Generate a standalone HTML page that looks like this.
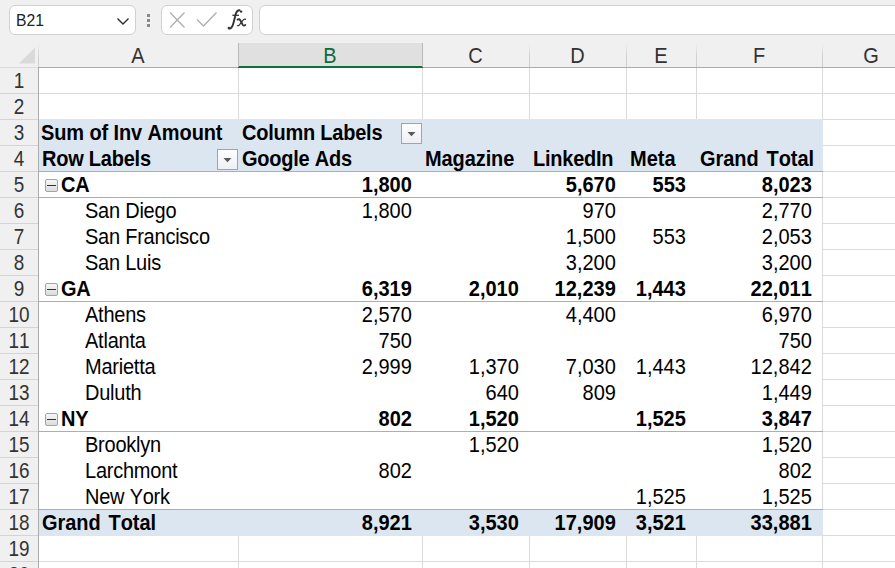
<!DOCTYPE html>
<html><head><meta charset="utf-8"><style>
*{box-sizing:border-box}
html,body{margin:0;padding:0}
body{width:895px;height:568px;overflow:hidden;position:relative;background:#f0f0f0;font-family:"Liberation Sans",sans-serif;color:#000}
.a{position:absolute}
.t{position:absolute;font-size:20px;line-height:22px;white-space:nowrap;font-kerning:none;font-feature-settings:"kern" 0}
.b{font-weight:bold}
.r{text-align:right}
.s{font-size:21.5px;transform:scaleX(0.93);transform-origin:left}
.s.r{transform-origin:right}
.hl{position:absolute;height:1px}
.vl{position:absolute;width:1px}
</style></head><body>

<div class="a" style="left:9px;top:5px;width:127px;height:30px;background:#fff;border:1px solid #d1d1d1;border-radius:6px"></div>
<div class="a" style="left:16px;top:12px;font-size:16px;line-height:18px;color:#222;transform:scaleX(0.98);transform-origin:left">B21</div>
<svg class="a" style="left:114px;top:14px" width="18" height="14" viewBox="0 0 18 14"><path d="M3.5 4.5 L9 10 L14.5 4.5" fill="none" stroke="#2b2b2b" stroke-width="1.4"/></svg>
<div class="a" style="left:147px;top:14px;width:3px;height:3px;background:#8a8a8a"></div>
<div class="a" style="left:147px;top:19px;width:3px;height:3px;background:#8a8a8a"></div>
<div class="a" style="left:147px;top:24px;width:3px;height:3px;background:#8a8a8a"></div>
<div class="a" style="left:161px;top:5px;width:92px;height:30px;background:#fff;border:1px solid #d1d1d1;border-radius:6px"></div>
<svg class="a" style="left:165px;top:8px" width="90" height="26" viewBox="0 0 90 26"><path d="M5 4.5 L19.5 19.5 M19.5 4.5 L5 19.5" stroke="#adadad" stroke-width="1.25" fill="none"/><path d="M32 11.5 L38.5 18 L51.5 4.5" stroke="#adadad" stroke-width="1.25" fill="none"/></svg>
<svg class="a" style="left:222px;top:5px" width="30" height="30" viewBox="0 0 30 30"><path d="M7.2 23.6 C9.2 23.8 10.6 21.5 11.6 17.5 L13.6 9.6 C14.4 6.4 15.8 5.2 17.6 5.3" fill="none" stroke="#333" stroke-width="1.9" stroke-linecap="round"/><circle cx="6.9" cy="22.9" r="1.25" fill="#333"/><circle cx="19.1" cy="6.6" r="1.2" fill="#333"/><path d="M10.4 10.3 L16.9 10.3" stroke="#333" stroke-width="1.3"/><path d="M15.6 14.6 Q17.4 13.4 18.5 15.6 L20.6 19.6 Q21.6 21.4 23.3 20.1" fill="none" stroke="#333" stroke-width="1.9" stroke-linecap="round"/><path d="M23.6 14.3 Q22.6 13.6 21.5 14.6 L17.4 19.8 Q16.4 21 15.4 20.7" fill="none" stroke="#333" stroke-width="1.2" stroke-linecap="round"/></svg>
<div class="a" style="left:259px;top:5px;width:700px;height:30px;background:#fff;border:1px solid #d1d1d1;border-radius:6px"></div>
<div class="a" style="left:239px;top:43px;width:183px;height:23px;background:#e0e0e0"></div>
<div class="a" style="left:238px;top:66px;width:185px;height:2px;background:#0f6f3c"></div>
<div class="vl" style="left:38px;top:43px;height:24px;background:linear-gradient(#f0f0f0,#d0d0d0 60%)"></div>
<div class="vl" style="left:238px;top:43px;height:24px;background:#b9b9b9"></div>
<div class="vl" style="left:422px;top:43px;height:24px;background:#b9b9b9"></div>
<div class="vl" style="left:529px;top:43px;height:24px;background:linear-gradient(#f0f0f0,#d0d0d0 60%)"></div>
<div class="vl" style="left:626px;top:43px;height:24px;background:linear-gradient(#f0f0f0,#d0d0d0 60%)"></div>
<div class="vl" style="left:696px;top:43px;height:24px;background:linear-gradient(#f0f0f0,#d0d0d0 60%)"></div>
<div class="vl" style="left:822px;top:43px;height:24px;background:linear-gradient(#f0f0f0,#d0d0d0 60%)"></div>
<div class="hl" style="left:0;top:67px;width:38px;background:#dcdcdc"></div>
<div class="hl" style="left:38px;top:67px;width:200px;background:#ababab"></div>
<div class="hl" style="left:423px;top:67px;width:472px;background:#ababab"></div>
<svg class="a" style="left:0;top:43px" width="38" height="24"><path d="M19 20.5 L35 4.5 L35 20.5 Z" fill="#dadada"/></svg>
<div class="t" style="left:38px;width:200px;top:45px;font-size:21.5px;transform:scaleX(0.93);text-align:center;color:#333">A</div>
<div class="t" style="left:238px;width:184px;top:45px;font-size:21.5px;transform:scaleX(0.93);text-align:center;color:#0e6b3a">B</div>
<div class="t" style="left:422px;width:107px;top:45px;font-size:21.5px;transform:scaleX(0.93);text-align:center;color:#333">C</div>
<div class="t" style="left:529px;width:97px;top:45px;font-size:21.5px;transform:scaleX(0.93);text-align:center;color:#333">D</div>
<div class="t" style="left:626px;width:70px;top:45px;font-size:21.5px;transform:scaleX(0.93);text-align:center;color:#333">E</div>
<div class="t" style="left:696px;width:126px;top:45px;font-size:21.5px;transform:scaleX(0.93);text-align:center;color:#333">F</div>
<div class="t" style="left:822px;width:98px;top:45px;font-size:21.5px;transform:scaleX(0.93);text-align:center;color:#333">G</div>
<div class="a" style="left:39px;top:68px;width:856px;height:500px;background:#fff"></div>
<div class="vl" style="left:38px;top:67px;height:501px;background:#ababab"></div>
<div class="hl" style="left:0;top:93px;width:38px;background:#d4d4d4"></div>
<div class="hl" style="left:39px;top:93px;width:856px;background:#dadada"></div>
<div class="hl" style="left:0;top:119px;width:38px;background:#d4d4d4"></div>
<div class="hl" style="left:39px;top:119px;width:856px;background:#dadada"></div>
<div class="hl" style="left:0;top:145px;width:38px;background:#d4d4d4"></div>
<div class="hl" style="left:39px;top:145px;width:856px;background:#dadada"></div>
<div class="hl" style="left:0;top:171px;width:38px;background:#d4d4d4"></div>
<div class="hl" style="left:39px;top:171px;width:856px;background:#dadada"></div>
<div class="hl" style="left:0;top:197px;width:38px;background:#d4d4d4"></div>
<div class="hl" style="left:39px;top:197px;width:856px;background:#dadada"></div>
<div class="hl" style="left:0;top:223px;width:38px;background:#d4d4d4"></div>
<div class="hl" style="left:39px;top:223px;width:856px;background:#dadada"></div>
<div class="hl" style="left:0;top:249px;width:38px;background:#d4d4d4"></div>
<div class="hl" style="left:39px;top:249px;width:856px;background:#dadada"></div>
<div class="hl" style="left:0;top:275px;width:38px;background:#d4d4d4"></div>
<div class="hl" style="left:39px;top:275px;width:856px;background:#dadada"></div>
<div class="hl" style="left:0;top:301px;width:38px;background:#d4d4d4"></div>
<div class="hl" style="left:39px;top:301px;width:856px;background:#dadada"></div>
<div class="hl" style="left:0;top:327px;width:38px;background:#d4d4d4"></div>
<div class="hl" style="left:39px;top:327px;width:856px;background:#dadada"></div>
<div class="hl" style="left:0;top:353px;width:38px;background:#d4d4d4"></div>
<div class="hl" style="left:39px;top:353px;width:856px;background:#dadada"></div>
<div class="hl" style="left:0;top:379px;width:38px;background:#d4d4d4"></div>
<div class="hl" style="left:39px;top:379px;width:856px;background:#dadada"></div>
<div class="hl" style="left:0;top:405px;width:38px;background:#d4d4d4"></div>
<div class="hl" style="left:39px;top:405px;width:856px;background:#dadada"></div>
<div class="hl" style="left:0;top:431px;width:38px;background:#d4d4d4"></div>
<div class="hl" style="left:39px;top:431px;width:856px;background:#dadada"></div>
<div class="hl" style="left:0;top:457px;width:38px;background:#d4d4d4"></div>
<div class="hl" style="left:39px;top:457px;width:856px;background:#dadada"></div>
<div class="hl" style="left:0;top:483px;width:38px;background:#d4d4d4"></div>
<div class="hl" style="left:39px;top:483px;width:856px;background:#dadada"></div>
<div class="hl" style="left:0;top:509px;width:38px;background:#d4d4d4"></div>
<div class="hl" style="left:39px;top:509px;width:856px;background:#dadada"></div>
<div class="hl" style="left:0;top:535px;width:38px;background:#d4d4d4"></div>
<div class="hl" style="left:39px;top:535px;width:856px;background:#dadada"></div>
<div class="hl" style="left:0;top:561px;width:38px;background:#d4d4d4"></div>
<div class="hl" style="left:39px;top:561px;width:856px;background:#dadada"></div>
<div class="hl" style="left:0;top:587px;width:38px;background:#d4d4d4"></div>
<div class="hl" style="left:39px;top:587px;width:856px;background:#dadada"></div>
<div class="vl" style="left:238px;top:68px;height:500px;background:#dadada"></div>
<div class="vl" style="left:422px;top:68px;height:500px;background:#dadada"></div>
<div class="vl" style="left:529px;top:68px;height:500px;background:#dadada"></div>
<div class="vl" style="left:626px;top:68px;height:500px;background:#dadada"></div>
<div class="vl" style="left:696px;top:68px;height:500px;background:#dadada"></div>
<div class="vl" style="left:822px;top:68px;height:500px;background:#dadada"></div>
<div class="t" style="left:0;width:38px;top:70px;font-size:21.5px;transform:scaleX(0.88);text-align:center;color:#333">1</div>
<div class="t" style="left:0;width:38px;top:96px;font-size:21.5px;transform:scaleX(0.88);text-align:center;color:#333">2</div>
<div class="t" style="left:0;width:38px;top:122px;font-size:21.5px;transform:scaleX(0.88);text-align:center;color:#333">3</div>
<div class="t" style="left:0;width:38px;top:148px;font-size:21.5px;transform:scaleX(0.88);text-align:center;color:#333">4</div>
<div class="t" style="left:0;width:38px;top:174px;font-size:21.5px;transform:scaleX(0.88);text-align:center;color:#333">5</div>
<div class="t" style="left:0;width:38px;top:200px;font-size:21.5px;transform:scaleX(0.88);text-align:center;color:#333">6</div>
<div class="t" style="left:0;width:38px;top:226px;font-size:21.5px;transform:scaleX(0.88);text-align:center;color:#333">7</div>
<div class="t" style="left:0;width:38px;top:252px;font-size:21.5px;transform:scaleX(0.88);text-align:center;color:#333">8</div>
<div class="t" style="left:0;width:38px;top:278px;font-size:21.5px;transform:scaleX(0.88);text-align:center;color:#333">9</div>
<div class="t" style="left:0;width:38px;top:304px;font-size:21.5px;transform:scaleX(0.88);text-align:center;color:#333">10</div>
<div class="t" style="left:0;width:38px;top:330px;font-size:21.5px;transform:scaleX(0.88);text-align:center;color:#333">11</div>
<div class="t" style="left:0;width:38px;top:356px;font-size:21.5px;transform:scaleX(0.88);text-align:center;color:#333">12</div>
<div class="t" style="left:0;width:38px;top:382px;font-size:21.5px;transform:scaleX(0.88);text-align:center;color:#333">13</div>
<div class="t" style="left:0;width:38px;top:408px;font-size:21.5px;transform:scaleX(0.88);text-align:center;color:#333">14</div>
<div class="t" style="left:0;width:38px;top:434px;font-size:21.5px;transform:scaleX(0.88);text-align:center;color:#333">15</div>
<div class="t" style="left:0;width:38px;top:460px;font-size:21.5px;transform:scaleX(0.88);text-align:center;color:#333">16</div>
<div class="t" style="left:0;width:38px;top:486px;font-size:21.5px;transform:scaleX(0.88);text-align:center;color:#333">17</div>
<div class="t" style="left:0;width:38px;top:512px;font-size:21.5px;transform:scaleX(0.88);text-align:center;color:#333">18</div>
<div class="t" style="left:0;width:38px;top:538px;font-size:21.5px;transform:scaleX(0.88);text-align:center;color:#333">19</div>
<div class="t" style="left:0;width:38px;top:564px;font-size:21.5px;transform:scaleX(0.88);text-align:center;color:#333">20</div>
<div class="a" style="left:39px;top:119px;width:784px;height:52px;background:#dce6f1"></div>
<div class="a" style="left:39px;top:172px;width:784px;height:337px;background:#fff"></div>
<div class="a" style="left:39px;top:510px;width:784px;height:26px;background:#dce6f1"></div>
<div class="vl" style="left:822px;top:172px;height:337px;background:#dadada"></div>
<div class="hl" style="left:39px;top:171px;width:784px;background:#95b3d7"></div>
<div class="hl" style="left:39px;top:197px;width:784px;background:#95b3d7"></div>
<div class="hl" style="left:39px;top:301px;width:784px;background:#95b3d7"></div>
<div class="hl" style="left:39px;top:431px;width:784px;background:#95b3d7"></div>
<div class="hl" style="left:39px;top:509px;width:784px;background:#95b3d7"></div>
<div class="t b s" style="letter-spacing:-0.12px;left:41px;top:122px">Sum of Inv Amount</div>
<div class="t b s" style="letter-spacing:-0.25px;left:242px;top:122px">Column Labels</div>
<div class="a" style="left:401px;top:123px;width:21px;height:21px;border:1px solid #a0a4aa;background:linear-gradient(#fefefe,#eceff4)"></div>
<svg class="a" style="left:401px;top:123px" width="21" height="21"><path d="M6.5 9 L14.5 9 L10.5 13.2 Z" fill="#5a5a5a"/></svg>
<div class="t b s" style="letter-spacing:-0.25px;left:42px;top:148px">Row Labels</div>
<div class="a" style="left:217px;top:149px;width:21px;height:21px;border:1px solid #a0a4aa;background:linear-gradient(#fefefe,#eceff4)"></div>
<svg class="a" style="left:217px;top:149px" width="21" height="21"><path d="M6.5 9 L14.5 9 L10.5 13.2 Z" fill="#5a5a5a"/></svg>
<div class="t b s" style="letter-spacing:-0.25px;left:242px;top:148px">Google Ads</div>
<div class="t b s" style="letter-spacing:-0.1px;left:425px;top:148px">Magazine</div>
<div class="t b s" style="letter-spacing:-0.25px;left:533px;top:148px">LinkedIn</div>
<div class="t b s" style="left:630px;top:148px">Meta</div>
<div class="t b s" style="word-spacing:2.5px;letter-spacing:-0.05px;left:700px;top:148px">Grand Total</div>
<div class="a" style="left:45px;top:179px;width:13px;height:13px;border:1px solid #93a6c6;border-radius:2px;background:linear-gradient(#f6f6f6,#dcdcdc)"></div>
<div class="a" style="left:47px;top:185px;width:9px;height:1px;background:#1f2f6a"></div>
<div class="t b s" style="letter-spacing:-0.25px;left:61px;top:174px">CA</div>
<div class="t b s r" style="right:483px;top:174px">1,800</div>
<div class="t b s r" style="right:279px;top:174px">5,670</div>
<div class="t b s r" style="right:209px;top:174px">553</div>
<div class="t b s r" style="right:83px;top:174px">8,023</div>
<div class="t s" style="letter-spacing:-0.25px;left:85px;top:200px">San Diego</div>
<div class="t s r" style="right:483px;top:200px">1,800</div>
<div class="t s r" style="right:279px;top:200px">970</div>
<div class="t s r" style="right:83px;top:200px">2,770</div>
<div class="t s" style="letter-spacing:-0.25px;left:85px;top:226px">San Francisco</div>
<div class="t s r" style="right:279px;top:226px">1,500</div>
<div class="t s r" style="right:209px;top:226px">553</div>
<div class="t s r" style="right:83px;top:226px">2,053</div>
<div class="t s" style="letter-spacing:-0.25px;left:85px;top:252px">San Luis</div>
<div class="t s r" style="right:279px;top:252px">3,200</div>
<div class="t s r" style="right:83px;top:252px">3,200</div>
<div class="a" style="left:45px;top:283px;width:13px;height:13px;border:1px solid #93a6c6;border-radius:2px;background:linear-gradient(#f6f6f6,#dcdcdc)"></div>
<div class="a" style="left:47px;top:289px;width:9px;height:1px;background:#1f2f6a"></div>
<div class="t b s" style="letter-spacing:-0.25px;left:61px;top:278px">GA</div>
<div class="t b s r" style="right:483px;top:278px">6,319</div>
<div class="t b s r" style="right:376px;top:278px">2,010</div>
<div class="t b s r" style="right:279px;top:278px">12,239</div>
<div class="t b s r" style="right:209px;top:278px">1,443</div>
<div class="t b s r" style="right:83px;top:278px">22,011</div>
<div class="t s" style="letter-spacing:-0.25px;left:85px;top:304px">Athens</div>
<div class="t s r" style="right:483px;top:304px">2,570</div>
<div class="t s r" style="right:279px;top:304px">4,400</div>
<div class="t s r" style="right:83px;top:304px">6,970</div>
<div class="t s" style="letter-spacing:-0.25px;left:85px;top:330px">Atlanta</div>
<div class="t s r" style="right:483px;top:330px">750</div>
<div class="t s r" style="right:83px;top:330px">750</div>
<div class="t s" style="letter-spacing:-0.25px;left:85px;top:356px">Marietta</div>
<div class="t s r" style="right:483px;top:356px">2,999</div>
<div class="t s r" style="right:376px;top:356px">1,370</div>
<div class="t s r" style="right:279px;top:356px">7,030</div>
<div class="t s r" style="right:209px;top:356px">1,443</div>
<div class="t s r" style="right:83px;top:356px">12,842</div>
<div class="t s" style="letter-spacing:-0.25px;left:85px;top:382px">Duluth</div>
<div class="t s r" style="right:376px;top:382px">640</div>
<div class="t s r" style="right:279px;top:382px">809</div>
<div class="t s r" style="right:83px;top:382px">1,449</div>
<div class="a" style="left:45px;top:413px;width:13px;height:13px;border:1px solid #93a6c6;border-radius:2px;background:linear-gradient(#f6f6f6,#dcdcdc)"></div>
<div class="a" style="left:47px;top:419px;width:9px;height:1px;background:#1f2f6a"></div>
<div class="t b s" style="letter-spacing:-0.25px;left:61px;top:408px">NY</div>
<div class="t b s r" style="right:483px;top:408px">802</div>
<div class="t b s r" style="right:376px;top:408px">1,520</div>
<div class="t b s r" style="right:209px;top:408px">1,525</div>
<div class="t b s r" style="right:83px;top:408px">3,847</div>
<div class="t s" style="letter-spacing:-0.25px;left:85px;top:434px">Brooklyn</div>
<div class="t s r" style="right:376px;top:434px">1,520</div>
<div class="t s r" style="right:83px;top:434px">1,520</div>
<div class="t s" style="letter-spacing:-0.25px;left:85px;top:460px">Larchmont</div>
<div class="t s r" style="right:483px;top:460px">802</div>
<div class="t s r" style="right:83px;top:460px">802</div>
<div class="t s" style="letter-spacing:-0.25px;left:85px;top:486px">New York</div>
<div class="t s r" style="right:209px;top:486px">1,525</div>
<div class="t s r" style="right:83px;top:486px">1,525</div>
<div class="t b s" style="word-spacing:2.5px;letter-spacing:-0.05px;left:42px;top:512px">Grand Total</div>
<div class="t b s r" style="right:483px;top:512px">8,921</div>
<div class="t b s r" style="right:376px;top:512px">3,530</div>
<div class="t b s r" style="right:279px;top:512px">17,909</div>
<div class="t b s r" style="right:209px;top:512px">3,521</div>
<div class="t b s r" style="right:83px;top:512px">33,881</div>
</body></html>
